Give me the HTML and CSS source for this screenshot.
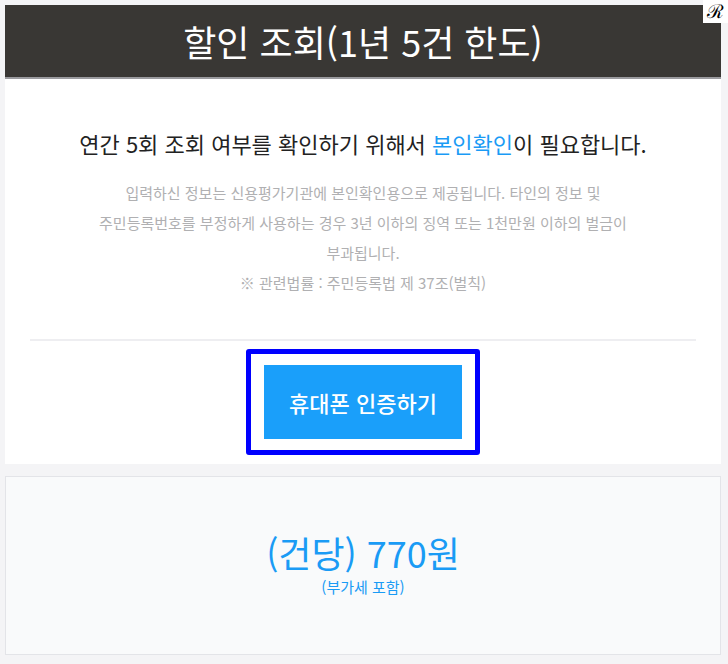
FILE: index.html
```html
<!DOCTYPE html>
<html lang="ko">

<head>
    <meta charset="UTF-8">
    <meta name="viewport" content="width=device-width, initial-scale=1.0">
    <title>할인 조회</title>
    <link rel="stylesheet" href="styles.css">
</head>

<body>
    <span class="badge">ℛ</span>

    <div class="card">
        <h1 class="title">할인 조회(1년 5건 한도)</h1>

        <div class="content">
            <p class="lead">연간 5회 조회 여부를 확인하기 위해서 <span class="blue">본인확인</span>이 필요합니다.</p>
            <p class="notice">입력하신 정보는 신용평가기관에 본인확인용으로 제공됩니다. 타인의 정보 및 주민등록번호를 부정하게 사용하는 경우 3년 이하의 징역 또는 1천만원 이하의 벌금이 부과됩니다.</p>
            <p class="notice">※ 관련법률 : 주민등록법 제 37조(벌칙)</p>

            <hr class="divider">

            <div class="focus">
                <button class="btn" id="인증">휴대폰 인증하기</button>
            </div>
        </div>
    </div>

    <div class="price">
        <p class="price-main">(건당) 770원</p>
        <p class="price-sub">(부가세 포함)</p>
    </div>
</body>

</html>
```

FILE: styles.css
```css
body {
    font-family: "Noto Sans CJK KR", "Noto Sans", sans-serif;
    margin: 0;
    padding: 5px 7px 0 5px;
    background-color: #f4f4f6;
    word-break: keep-all;
}

p {
    margin: 0;
}

.badge {
    position: absolute;
    top: 0;
    right: 0;
    width: 25px;
    height: 23px;
    background-color: #fff;
    color: #000;
    font-family: "DejaVu Serif", serif;
    font-size: 19px;
    line-height: 23px;
    text-align: center;
}

.card {
    background-color: #ffffff;
}

.title {
    margin: 0;
    height: 72px;
    line-height: 72px;
    background-color: #393734;
    border-bottom: 2px solid #9a9a9e;
    color: #fff;
    font-size: 36px;
    font-weight: 400;
    text-align: center;
}

.content {
    padding: 49px 25px 9px;
    text-align: center;
}

.lead {
    font-size: 22px;
    line-height: 30px;
    color: #222;
    margin-bottom: 20px;
}

.blue {
    color: #1a9bf5;
}

.notice {
    max-width: 570px;
    margin: 0 auto;
    font-size: 15px;
    line-height: 30px;
    color: #b0b0b2;
}

.divider {
    border: none;
    height: 2px;
    background-color: #eeeef1;
    margin: 41px 0 8px;
}

.focus {
    display: inline-block;
    padding: 11px 13px;
    border: 5px solid #0000ff;
    border-radius: 3px;
}

.btn {
    display: block;
    width: 198px;
    height: 74px;
    background-color: #1a9ffa;
    color: #fff;
    border: none;
    font-family: inherit;
    font-size: 22px;
    font-weight: 500;
    cursor: pointer;
}

.price {
    margin-top: 12px;
    height: 173px;
    background-color: #f9fafb;
    border: 1px solid #e3e4e8;
    display: flex;
    flex-direction: column;
    align-items: center;
    justify-content: center;
    color: #1a9bf5;
    padding-bottom: 4px;
}

.price-main {
    font-size: 36px;
    line-height: 42px;
}

.price-sub {
    font-size: 15px;
    line-height: 20px;
    margin-top: 4px;
}
```
